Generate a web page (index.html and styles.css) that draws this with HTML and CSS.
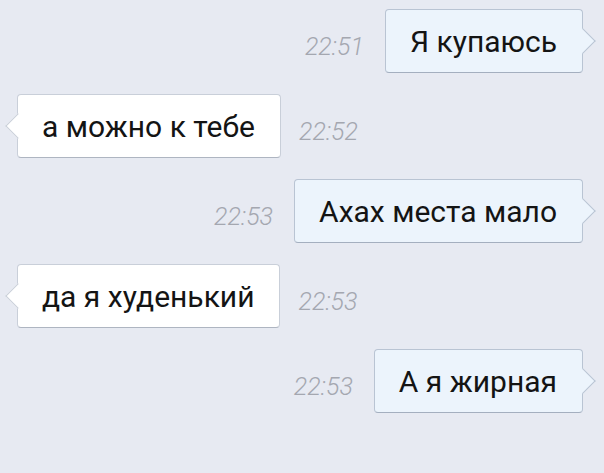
FILE: index.html
```html
<!DOCTYPE html>
<html lang="ru">
<head>
    <meta charset="UTF-8">
    <meta name="viewport" content="width=device-width, initial-scale=1.0">
    <title>Чат</title>
    <link rel="stylesheet" href="styles.css">
</head>
<body>
    <main class="chat">
        <div class="msg out">
            <span class="time">22:51</span>
            <div class="bubble">Я купаюсь</div>
        </div>
        <div class="msg in">
            <div class="bubble">а можно к тебе</div>
            <span class="time">22:52</span>
        </div>
        <div class="msg out">
            <span class="time">22:53</span>
            <div class="bubble">Ахах места мало</div>
        </div>
        <div class="msg in">
            <div class="bubble">да я худенький</div>
            <span class="time">22:53</span>
        </div>
        <div class="msg out">
            <span class="time">22:53</span>
            <div class="bubble">А я жирная</div>
        </div>
    </main>
</body>
</html>
```

FILE: styles.css
```css
* {
    padding: 0;
    margin: 0;
    box-sizing: border-box;
}

body {
    background-color: #e7eaf2;
    font-family: Roboto, "Noto Sans", sans-serif;
    width: 604px;
    height: 473px;
    overflow: hidden;
}

.chat {
    display: flex;
    flex-direction: column;
    gap: 21px;
    padding: 9px 21px 0 17px;
}

.msg {
    display: flex;
    align-items: center;
}

.msg.out {
    justify-content: flex-end;
    gap: 21px;
}

.msg.in {
    justify-content: flex-start;
    gap: 18px;
}

.bubble {
    position: relative;
    height: 64px;
    padding: 0 25px 0 24px;
    display: flex;
    align-items: center;
    font-size: 30px;
    color: #141414;
    border-radius: 4px;
    border: 1px solid #c9cfd9;
    border-bottom-color: #aeb5c1;
}

.out .bubble {
    background-color: #ecf4fc;
    border-color: #b9c4d3;
    border-bottom-color: #a4afbf;
}

.in .bubble {
    background-color: #ffffff;
}

/* the little arrow on the side */
.bubble::after {
    content: "";
    position: absolute;
    top: 50%;
    width: 17px;
    height: 17px;
    background-color: inherit;
    border: 0 solid;
    border-color: inherit;
}

.out .bubble::after {
    right: -9.5px;
    border-top-width: 1px;
    border-right-width: 1px;
    border-color: #b9c4d3;
    transform: translateY(-50%) rotate(45deg);
}

.in .bubble::after {
    left: -9.5px;
    border-bottom-width: 1px;
    border-left-width: 1px;
    border-color: #c9cfd9;
    transform: translateY(-50%) rotate(45deg);
}

.time {
    margin-top: 10px;
    font-size: 25px;
    font-style: italic;
    font-weight: 300;
    color: #a4a7b0;
}
```
